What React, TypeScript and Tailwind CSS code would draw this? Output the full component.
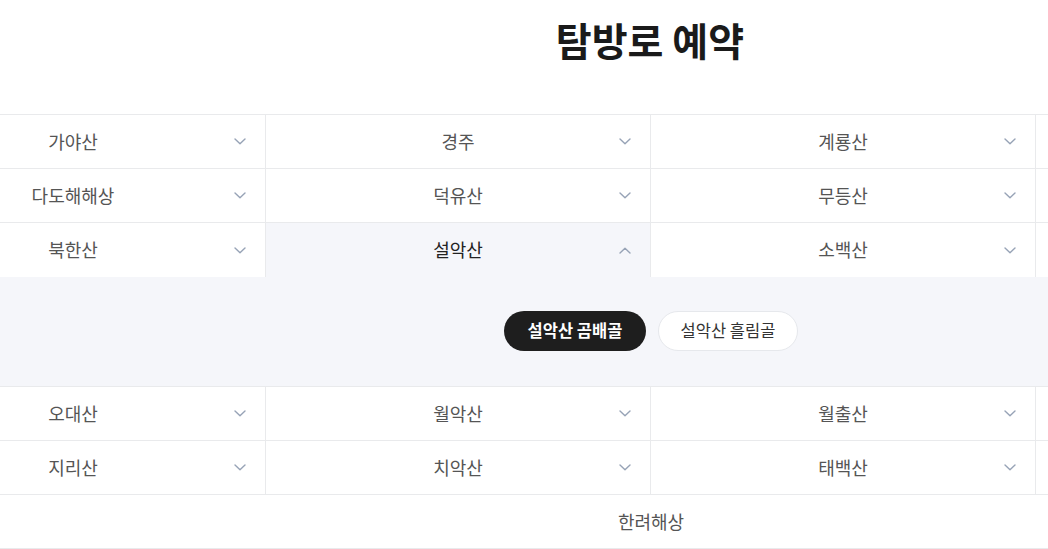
import React from "react";

const rows: string[][] = [
  ["가야산", "경주", "계룡산", "내장산"],
  ["다도해해상", "덕유산", "무등산", "변산반도"],
  ["북한산", "설악산", "소백산", "속리산"],
];
const rows2: string[][] = [
  ["오대산", "월악산", "월출산", "주왕산"],
  ["지리산", "치악산", "태백산", "태안해안"],
];

function Chevron({ up }: { up?: boolean }) {
  return (
    <svg width="12" height="7" viewBox="0 0 12 7" fill="none" className="shrink-0">
      {up ? (
        <polyline points="1,6 6,1.2 11,6" stroke="#97a3b6" strokeWidth="1.4" strokeLinecap="round" strokeLinejoin="round" />
      ) : (
        <polyline points="1,1 6,5.8 11,1" stroke="#97a3b6" strokeWidth="1.4" strokeLinecap="round" strokeLinejoin="round" />
      )}
    </svg>
  );
}

function Cell({ name, selected, noBottom }: { name: string; selected?: boolean; noBottom?: boolean }) {
  return (
    <div
      className={
        "flex h-[54px] items-center border-r border-[#e9eaec] px-[19px] " +
        (noBottom ? "" : "border-b ") +
        (selected ? "bg-[#f5f6fa] text-[#222222]" : "bg-white text-[#555555]")
      }
    >
      <span className="w-[12px] shrink-0" />
      <span className="flex-1 -translate-y-[1px] text-center text-[18px] leading-none">{name}</span>
      <Chevron up={selected} />
    </div>
  );
}

export default function App() {
  return (
    <div className="w-full overflow-hidden bg-white font-['Noto_Sans_CJK_KR',sans-serif]">
      <div className="w-[1300px]">
        <div className="h-[114px] pt-[11px] text-center">
          <h1 className="text-[39px] font-bold leading-[56px] text-[#1a1a1a]">탐방로 예약</h1>
        </div>
      </div>
      <div className="-ml-[119px] w-[1540px] border-t border-[#e9eaec]">
        {rows.map((r, i) => (
          <div key={i} className="grid grid-cols-4">
            {r.map((n) => (
              <Cell key={n} name={n} selected={n === "설악산"} noBottom={i === 2} />
            ))}
          </div>
        ))}
        <div className="flex h-[110px] items-center justify-center gap-[12px] border-b border-[#e9eaec] bg-[#f5f6fa]">
          <button className="h-[40px] w-[142px] -translate-y-[1px] rounded-full bg-[#1e1e1e] text-[16.5px] font-bold text-white">
            설악산 곰배골
          </button>
          <button className="h-[40px] w-[140px] -translate-y-[1px] rounded-full border border-[#e6e8ec] bg-white text-[16.5px] text-[#333333]">
            설악산 흘림골
          </button>
        </div>
        {rows2.map((r, i) => (
          <div key={i} className="grid grid-cols-4">
            {r.map((n) => (
              <Cell key={n} name={n} />
            ))}
          </div>
        ))}
        <div className="flex h-[54px] items-center border-b border-[#e9eaec] px-[19px] text-[#555555]">
          <span className="w-[12px] shrink-0" />
          <span className="flex-1 -translate-y-[1px] text-center text-[18px] leading-none">한려해상</span>
          <Chevron />
        </div>
      </div>
    </div>
  );
}
